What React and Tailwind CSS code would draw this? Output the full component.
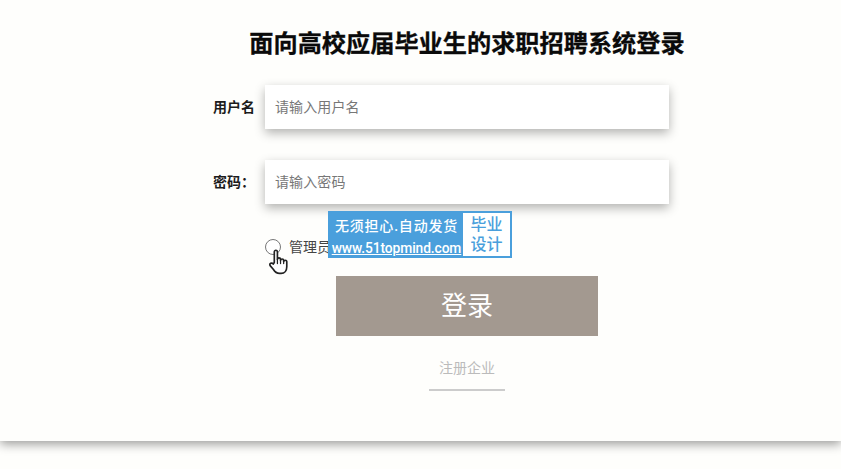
const cjk = "font-['Roboto','Noto_Sans_CJK_SC',sans-serif]";

const Field = ({ label, placeholder, className }) => (
  <div className={`flex items-center ${className}`}>
    <label className="w-[52px] text-[14px] font-bold text-[#1c1c1c]">{label}</label>
    <input
      placeholder={placeholder}
      className="w-[404px] h-[44px] px-[10px] bg-white text-[14px] tracking-[0.1px] placeholder:text-[#777] outline-none shadow-[0_4px_10px_rgba(0,0,0,0.3)]"
    />
  </div>
);

const Hand = () => (
  <svg className="absolute left-[268px] top-[249px]" width="23" height="26" viewBox="0 0 22 25" fill="#fff" stroke="#222" strokeWidth="1.6" strokeLinejoin="round" strokeLinecap="round">
    <path d="M6 13V3c0-2.400 3-2.400 3 0v7c0-2 3-2 3 0v1c0-1.800 3-1.800 3 0v1c0-1.600 3-1.600 3 0v5c0 3.500-2 6.500-5.500 6.500H11c-3 0-4.500-1.500-6-4L2 16c-1-2 1.500-3.500 3-1.500z" />
    <path d="M9 10v4M12 11v3M15 12v2" strokeWidth="1.2" />
  </svg>
);

const Watermark = () => (
  <div className="absolute left-[328px] top-[211px] flex w-[184px] h-[47px] bg-[#4a9fdc] p-[2px] text-white">
    <div className="w-[133px] flex flex-col items-center">
      <span className="text-[14px] leading-[22px] mt-[2px] font-medium tracking-[0.8px] whitespace-nowrap">无须担心.自动发货</span>
      <span className="text-[13.800px] leading-[20px] mt-[1px] font-medium underline tracking-[-0.1px] whitespace-nowrap">www.51topmind.com</span>
    </div>
    <div className="flex-1 bg-white text-[#4a9fdc] text-[16px] leading-[20px] font-medium flex flex-col items-center justify-center">
      <span>毕业</span>
      <span>设计</span>
    </div>
  </div>
);

export default function App() {
  return (
    <div className={`relative h-[469px] overflow-hidden bg-[#fefefc] ${cjk}`}>
      <div className="h-[441px] bg-[#fefefc] shadow-[0_3px_10px_rgba(0,0,0,0.4)] pt-[28px] pl-[213px]">
        <div className="w-[508px]">
          <h1 className="h-[32px] text-center text-[24.200px] leading-[32px] font-bold text-[#0a0a0a] [-webkit-text-stroke:0.3px_#0a0a0a] whitespace-nowrap">面向高校应届毕业生的求职招聘系统登录</h1>
          <Field label="用户名" placeholder="请输入用户名" className="mt-[25px]" />
          <Field label="密码：" placeholder="请输入密码" className="mt-[31px]" />
          <div className="mt-[35px] ml-[52px] flex items-center h-[16px]">
            <span className="w-[16px] h-[16px] rounded-full border-[1.500px] border-[#777] bg-white" />
            <span className="ml-[8px] text-[14px] text-[#444]">管理员</span>
          </div>
          <button className="block mx-auto mt-[21px] w-[262px] h-[60px] bg-[#a39990] text-white text-[26px]">登录</button>
          <a className="block mx-auto mt-[22px] w-[76px] pb-[11px] border-b-2 border-[#ccc] text-center text-[14px] leading-[20px] text-[#bbb]">注册企业</a>
        </div>
      </div>
      <Watermark />
      <Hand />
    </div>
  );
}
